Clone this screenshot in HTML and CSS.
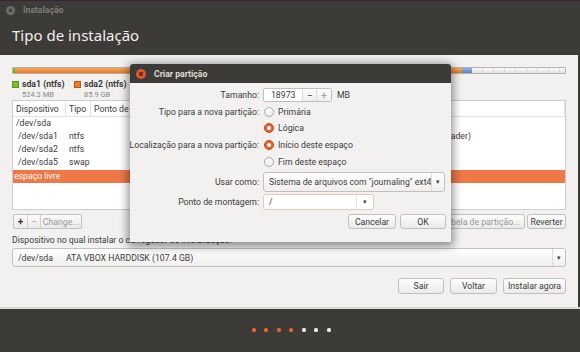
FILE: index.html
```html
<!DOCTYPE html>
<html lang="pt">
<head>
<meta charset="utf-8">
<title>Instalação</title>
<link rel="stylesheet" href="styles.css">
</head>
<body>
<div class="window">
  <div class="titlebar">
    <span class="tb-close"><svg width="9" height="9" viewBox="0 0 9 9"><circle cx="4.5" cy="4.5" r="4.5" fill="#6f6d69"/><path d="M3 3L6 6M6 3L3 6" stroke="#3c3b37" stroke-width="1.2"/></svg></span>
    <span class="tb-title">Instalação</span>
  </div>
  <div class="header">Tipo de instalação</div>
  <div class="content">
    <div class="pbar">
      <div class="seg seg-green"></div>
      <div class="seg seg-orange"></div>
      <div class="seg seg-blue"></div>
      <div class="seg seg-free"></div>
    </div>
    <div class="legend">
      <div class="leg">
        <span class="sq sq-green"></span>
        <div><div class="leg-name">sda1 (ntfs)</div><div class="leg-size">524.3 MB</div></div>
      </div>
      <div class="leg">
        <span class="sq sq-orange"></span>
        <div><div class="leg-name">sda2 (ntfs)</div><div class="leg-size">85.9 GB</div></div>
      </div>
    </div>
    <div class="table">
      <div class="thead">
        <div class="th c1">Dispositivo</div>
        <div class="th c2">Tipo</div>
        <div class="th c3">Ponto de montagem</div>
        <div class="th c4">Formatar?</div>
        <div class="th c5">Tamanho</div>
        <div class="th c6"></div>
      </div>
      <div class="tr"><div class="td c1">/dev/sda</div></div>
      <div class="tr"><div class="td c1 ind">/dev/sda1</div><div class="td c2">ntfs</div><div class="td c3"></div><div class="td c4"></div><div class="td c5">524 MB</div><div class="td c6">Windows 7 (loader)</div></div>
      <div class="tr"><div class="td c1 ind">/dev/sda2</div><div class="td c2">ntfs</div></div>
      <div class="tr"><div class="td c1 ind">/dev/sda5</div><div class="td c2">swap</div></div>
      <div class="tr sel"><div class="td c1">espaço livre</div></div>
    </div>
    <div class="tools">
      <div class="tgroup">
        <span class="tbtn tb-plus">+</span><span class="tbtn tb-minus">−</span><span class="tbtn tb-change">Change...</span>
      </div>
      <div class="tgroup-r">
        <span class="btn btn-new">Nova tabela de partição...</span>
        <span class="btn btn-rev">Reverter</span>
      </div>
    </div>
    <div class="boot-label">Dispositivo no qual instalar o carregador de inicialização:</div>
    <div class="combo boot-combo"><span class="combo-text"><span class="dev">/dev/sda</span>ATA VBOX HARDDISK (107.4 GB)</span><span class="combo-arrow">▾</span></div>
    <div class="actions">
      <span class="btn btn-act w-sair">Sair</span>
      <span class="btn btn-act w-voltar">Voltar</span>
      <span class="btn btn-act w-inst">Instalar agora</span>
    </div>
  </div>
  <div class="footer">
    <span class="dot on"></span><span class="dot on"></span><span class="dot on"></span><span class="dot on"></span><span class="dot"></span><span class="dot"></span><span class="dot"></span>
  </div>

  <div class="dialog">
    <div class="dlg-head">
      <svg class="dlg-close" width="10" height="10" viewBox="0 0 10 10"><circle cx="5" cy="5" r="5" fill="#e0582a"/><path d="M3.3 3.3L6.7 6.7M6.7 3.3L3.3 6.7" stroke="#4a2416" stroke-width="1.3"/></svg>
      <span class="dlg-title">Criar partição</span>
    </div>
    <div class="dlg-body">
      <div class="form">
        <div class="lbl r-spin">Tamanho:</div>
        <div class="ctl r-spin">
          <span class="spin"><span class="spin-val">18973</span><span class="spin-b">−</span><span class="spin-b">+</span></span>
          <span class="unit">MB</span>
        </div>
        <div class="lbl r-rad">Tipo para a nova partição:</div>
        <div class="ctl r-rad"><span class="radio"></span>Primária</div>
        <div class="lbl r-rad"></div>
        <div class="ctl r-rad"><span class="radio on"></span>Lógica</div>
        <div class="lbl r-rad">Localização para a nova partição:</div>
        <div class="ctl r-rad"><span class="radio on"></span>Início deste espaço</div>
        <div class="lbl r-rad"></div>
        <div class="ctl r-rad"><span class="radio"></span>Fim deste espaço</div>
        <div class="lbl r-combo">Usar como:</div>
        <div class="ctl r-combo"><span class="combo use-combo"><span class="combo-text">Sistema de arquivos com "journaling" ext4</span><span class="combo-arrow">▾</span></span></div>
        <div class="lbl r-mount">Ponto de montagem:</div>
        <div class="ctl r-mount"><span class="combo mount-combo"><span class="combo-text">/</span><span class="combo-arrow">▾</span></span></div>
      </div>
      <div class="dlg-actions">
        <span class="btn w-cancel">Cancelar</span>
        <span class="btn w-ok">OK</span>
      </div>
    </div>
  </div>
</div>
</body>
</html>
```

FILE: styles.css
```css
* { box-sizing: border-box; }
html, body { margin: 0; padding: 0; }
body {
  width: 580px;
  height: 352px;
  overflow: hidden;
  background: #3c3b37;
  font-family: Roboto, "Noto Sans", sans-serif;
  font-size: 8.7px;
  color: #3c3c3c;
}
.window {
  position: relative;
  width: 580px;
  height: 352px;
  display: flex;
  flex-direction: column;
  background: #3c3b37;
  border-top: 1px solid #3a2534;
}
.titlebar {
  height: 18px;
  display: flex;
  align-items: center;
  padding-left: 6px;
  gap: 8px;
}
.tb-close { display: flex; }
.tb-title {
  color: #7e7c78;
  font-weight: bold;
  font-size: 8.7px;
}
.header {
  height: 36px;
  padding-left: 12px;
  padding-top: 6px;
  color: #efefef;
  font-family: "Noto Sans", sans-serif;
  font-size: 15px;
}
.content {
  height: 252px;
  background: #f2f1f0;
  padding: 12px 12px 0 12px;
  display: flex;
  flex-direction: column;
  border-right: 2px solid #3c3b37;
}
.pbar {
  height: 7px;
  display: flex;
  border: 1px solid #b4b2ae;
  border-radius: 1px;
  overflow: hidden;
}
.seg { height: 100%; }
.seg-green { width: 2px; background: #6dbb2d; }
.seg-orange { width: 447px; background: linear-gradient(#f6a55f, #e97b26); }
.seg-blue { width: 10px; background: linear-gradient(#8fb0dd, #5d86c4); }
.seg-free {
  flex: 1;
  background:
    repeating-linear-gradient(90deg, transparent 0 10px, #d8d7d5 10px 11px),
    linear-gradient(#fbfbfb, #e2e1df);
}
.legend {
  display: flex;
  gap: 0;
  margin-top: 5px;
  height: 21px;
}
.leg { display: flex; gap: 3px; align-items: flex-start; width: 62px; }
.sq {
  display: inline-block;
  width: 7px; height: 7px;
  margin-top: 2px;
  border: 1px solid rgba(0,0,0,.25);
}
.sq-green { background: #73c62a; }
.sq-orange { background: #f07a22; }
.leg-name { font-weight: bold; color: #3c3c3c; line-height: 11px; }
.leg-size { color: #8a8884; font-size: 7.5px; line-height: 9px; }
.table {
  height: 110px;
  background: #fff;
  border: 1px solid #cfcdca;
  overflow: hidden;
}
.thead, .tr { display: flex; }
.thead { height: 16px; border-bottom: 1px solid #e2e1df; }
.th {
  padding-left: 3px;
  line-height: 16px;
  border-right: 1px solid #e6e5e3;
  white-space: nowrap;
  overflow: hidden;
}
.tr { height: 13px; line-height: 13px; }
.td { padding-left: 3px; white-space: nowrap; overflow: hidden; }
.td.ind { padding-left: 5px; }
.c1 { width: 53px; }
.c2 { width: 25px; }
.c3 { width: 100px; }
.c4 { width: 55px; }
.c5 { width: 60px; }
.c6 { flex: 1; }
.td.c6 { padding-left: 90px; }
.tr.sel { background: #f07746; color: #fff; margin-top: 1px; }
.tr.sel .td { padding-left: 1px; }
.tools {
  margin-top: 4px;
  display: flex;
  justify-content: space-between;
  height: 14px;
}
.tgroup {
  display: flex;
  height: 15px;
  border: 1px solid #c5c3c0;
  border-radius: 2px;
  background: linear-gradient(#fafafa, #ebeae8);
  margin-left: 1px;
}
.tbtn {
  display: flex; align-items: center; justify-content: center;
  border-right: 1px solid #d3d1ce;
}
.tb-plus { width: 14px; font-weight: bold; font-size: 10px; color: #333; }
.tb-minus { width: 13px; font-size: 10px; color: #999; }
.tb-change { width: 40px; color: #9a9894; border-right: 0; }
.tgroup-r { display: flex; gap: 2px; }
.btn {
  display: inline-flex; align-items: center; justify-content: center;
  border: 1px solid #c2c0bd;
  border-radius: 3px;
  background: linear-gradient(#fdfdfd, #ebeae8);
  color: #3c3c3c;
  white-space: nowrap;
}
.btn-new { width: 120px; height: 15px; color: #9a9894; justify-content: flex-end; padding-right: 4px; }
.btn-rev { width: 39px; height: 15px; }
.boot-label { margin-top: 6px; line-height: 12px; }
.combo {
  display: flex;
  align-items: center;
  border: 1px solid #c2c0bd;
  border-radius: 3px;
  background: linear-gradient(#fefefe, #f0efee);
  white-space: nowrap;
}
.combo-text { flex: 1; padding-left: 5px; overflow: hidden; }
.combo-arrow {
  width: 13px;
  align-self: stretch;
  display: flex; align-items: center; justify-content: center;
  border-left: 1px solid #dddbd8;
  font-size: 7px;
  color: #444;
}
.boot-combo { margin-top: 2px; height: 19px; }
.dev { margin-right: 13px; }
.actions {
  margin-top: 11px;
  display: flex;
  justify-content: flex-end;
  gap: 6px;
}
.btn-act { height: 16px; }
.w-sair { width: 46px; }
.w-voltar { width: 47px; }
.w-inst { width: 63px; }
.footer {
  flex: 1;
  display: flex;
  justify-content: center;
  align-items: center;
  gap: 8.5px;
  padding-left: 2px;
  padding-bottom: 1px;
  border-top: 2px solid #d9d8d6;
}
.dot {
  width: 4px; height: 4px;
  border-radius: 1.5px;
  background: #e8e8e6;
}
.dot.on { background: #e9622c; }

/* dialog */
.dialog {
  position: absolute;
  left: 130px;
  top: 63px;
  width: 321px;
  height: 178px;
  background: #f2f1f0;
  box-shadow: 0 2px 10px 2px rgba(0,0,0,.45);
  border-radius: 3px 3px 0 0;
  display: flex;
  flex-direction: column;
}
.dlg-head {
  height: 19px;
  background: #3c3b37;
  border-radius: 3px 3px 0 0;
  display: flex;
  align-items: center;
  padding-left: 6px;
  gap: 8px;
}
.dlg-title { color: #dfdbd2; font-weight: bold; font-size: 8.7px; }
.dlg-body { flex: 1; padding-top: 5px; display: flex; flex-direction: column; }
.form {
  display: grid;
  grid-template-columns: 129px 1fr;
  column-gap: 4px;
  grid-template-rows: 14px 16px 16px 16px 16px 20px 16px;
  row-gap: 1px;
}
.lbl { text-align: right; white-space: nowrap; display: flex; align-items: center; justify-content: flex-end; }
.ctl { display: flex; align-items: center; white-space: nowrap; }
.r-rad:nth-child(3), .r-rad:nth-child(4) { margin-top: 2px; }
.form > .r-combo { margin-top: 1px; }
.form > .r-mount { margin-top: 3px; }
.spin {
  display: flex;
  height: 14px;
  width: 69px;
  border: 1px solid #c2c0bd;
  border-radius: 2px;
  background: #fff;
}
.spin-val { width: 40px; text-align: center; line-height: 12px; border-right: 1px solid #dedcd9; }
.spin-b {
  width: 14px; display: flex; align-items: center; justify-content: center;
  font-size: 10px; background: linear-gradient(#fcfcfc, #efeeec);
  border-right: 1px solid #dedcd9;
}
.spin-b:last-child { border-right: 0; color: #999; }
.unit { margin-left: 5px; }
.radio {
  width: 10px; height: 10px;
  border-radius: 50%;
  border: 1px solid #aaa8a5;
  background: linear-gradient(#fff, #ecebe9);
  margin: 0 4px 0 1px;
  position: relative;
}
.radio.on {
  border-color: #c14a1a;
  background: #e8622d;
}
.radio.on::after {
  content: "";
  position: absolute;
  left: 2px; top: 2px;
  width: 4px; height: 4px;
  border-radius: 50%;
  background: #fff;
}
.use-combo { width: 182px; height: 20px; }
.mount-combo { width: 111px; height: 16px; background: #fff; border-color: #e7c9b7; }
.mount-combo .combo-arrow { width: 17px; border-left-color: #ece6e2; }
.dlg-actions {
  margin-top: 6px;
  display: flex;
  justify-content: flex-end;
  gap: 4px;
  padding-right: 5px;
}
.w-cancel { width: 48px; height: 15px; }
.w-ok { width: 46px; height: 15px; }
```
